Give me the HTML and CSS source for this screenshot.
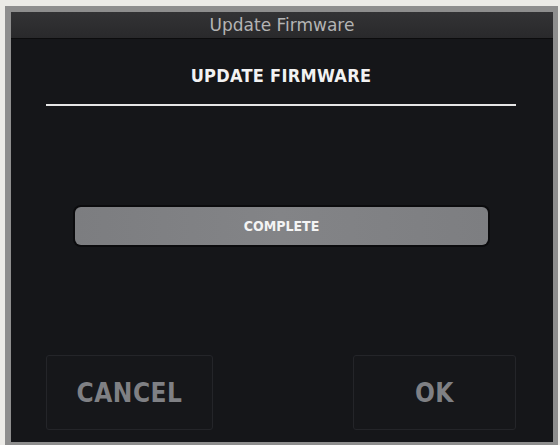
FILE: index.html
```html
<!DOCTYPE html>
<html lang="en">

<head>
    <meta charset="UTF-8">
    <meta name="viewport" content="width=device-width, initial-scale=1.0">
    <title>Update Firmware</title>
    <link rel="stylesheet" href="styles.css">
</head>

<body>
    <div class="window">
        <div class="title-bar">Update Firmware</div>

        <div class="content">
            <h1 class="heading">UPDATE FIRMWARE</h1>
            <div class="rule"></div>

            <!-- progress -->
            <div class="progress">
                <span>COMPLETE</span>
            </div>

            <div class="actions">
                <button class="btn btn-cancel">CANCEL</button>
                <button class="btn btn-ok">OK</button>
            </div>
        </div>
    </div>
</body>

</html>
```

FILE: styles.css
```css
body {
    margin: 0;
    padding: 0;
    background-color: #ecebe7;
    font-family: "DejaVu Sans Condensed", "DejaVu Sans", sans-serif;
}

.window {
    margin: 6px 2px 0 5px;
    border: 6px solid #8e8e8e;
    border-bottom-width: 3px;
    border-right-width: 5px;
    background-color: #151619;
}

.title-bar {
    height: 26px;
    line-height: 26px;
    border-bottom: 1px solid #0c0c0d;
    background: linear-gradient(#333335, #29292b);
    color: #b4b4b4;
    font-family: "DejaVu Sans", sans-serif;
    font-size: 17px;
    text-align: center;
}

.content {
    height: 403px;
    padding: 0 37px 0 35px;
    display: flex;
    flex-direction: column;
}

.heading {
    margin: 26px 0 0;
    line-height: 22px;
    font-size: 18px;
    font-weight: bold;
    letter-spacing: 0.3px;
    color: #f2f2f2;
    text-align: center;
}

.rule {
    height: 2px;
    margin-top: 17px;
    background-color: #e6e6e6;
}

.progress {
    margin: 101px 28px 0 29px;
    height: 38px;
    border-radius: 6px;
    background: linear-gradient(90deg, #7c7d80, #838487 50%, #7d7e81);
    box-shadow: 0 0 0 2px #0b0b0d;
    display: flex;
    align-items: center;
    justify-content: center;
}

.progress span {
    color: #f4f4f4;
    font-size: 14px;
    font-weight: bold;
}

.actions {
    margin-top: auto;
    margin-bottom: 12px;
    display: flex;
    justify-content: space-between;
}

.btn {
    height: 75px;
    border: 1px solid #242529;
    border-radius: 3px;
    background-color: #16171a;
    color: #7f8084;
    font-family: "DejaVu Sans Condensed", "DejaVu Sans", sans-serif;
    font-size: 26px;
    font-weight: bold;
    letter-spacing: 0.5px;
    cursor: pointer;
}

.btn-cancel {
    width: 167px;
}

.btn-ok {
    width: 163px;
}
```
